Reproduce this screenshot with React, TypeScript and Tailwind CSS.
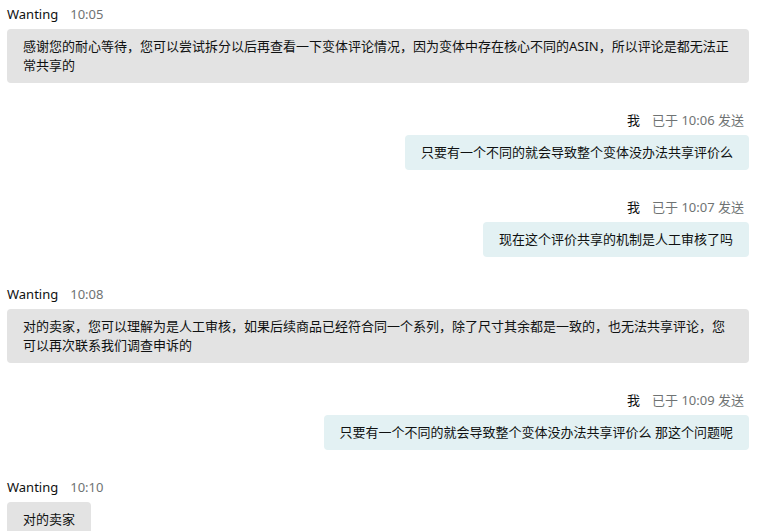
import React from "react";

type Msg = {
    mine: boolean;
    time: string;
    text: string;
};

const messages: Msg[] = [
    {
        mine: false,
        time: "10:05",
        text: "感谢您的耐心等待，您可以尝试拆分以后再查看一下变体评论情况，因为变体中存在核心不同的ASIN，所以评论是都无法正常共享的",
    },
    { mine: true, time: "10:06", text: "只要有一个不同的就会导致整个变体没办法共享评价么" },
    { mine: true, time: "10:07", text: "现在这个评价共享的机制是人工审核了吗" },
    {
        mine: false,
        time: "10:08",
        text: "对的卖家，您可以理解为是人工审核，如果后续商品已经符合同一个系列，除了尺寸其余都是一致的，也无法共享评论，您可以再次联系我们调查申诉的",
    },
    { mine: true, time: "10:09", text: "只要有一个不同的就会导致整个变体没办法共享评价么 那这个问题呢" },
    { mine: false, time: "10:10", text: "对的卖家" },
];

const Message: React.FC<{ msg: Msg }> = ({ msg }) => {
    if (msg.mine) {
        return (
            <div className="flex flex-col items-end mb-[28px]">
                <div className="h-[18px] leading-[18px] flex gap-[12px] pr-[5px]">
                    <span className="text-[#0f1111]">我</span>
                    <span className="text-[#6f7373]">已于 {msg.time} 发送</span>
                </div>
                <div className="mt-[6px] bg-[#e3f1f3] rounded px-4 py-2 leading-[19px] text-[#0f1111]">
                    {msg.text}
                </div>
            </div>
        );
    }
    return (
        <div className="flex flex-col items-start mb-[28px]">
            <div className="h-[18px] leading-[18px] flex gap-[12px]">
                <span className="text-[#0f1111]">Wanting</span>
                <span className="text-[#6f7373]">{msg.time}</span>
            </div>
            <div className="mt-[6px] bg-[#e3e3e3] rounded px-4 py-2 leading-[19px] text-[#0f1111]">
                {msg.text}
            </div>
        </div>
    );
};

export default function App() {
    return (
        <div className="w-[762px] h-[531px] overflow-hidden bg-white pt-[5px] pl-[7px] pr-[13px] text-[13px] font-['Noto_Sans','Noto_Sans_CJK_SC',sans-serif]">
            {messages.map((m, i) => (
                <Message key={i} msg={m} />
            ))}
        </div>
    );
}
